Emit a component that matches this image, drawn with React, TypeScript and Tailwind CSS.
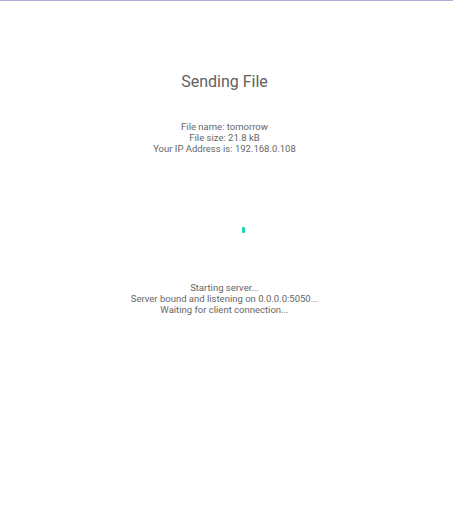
import React from "react";

const info = ["File name: tomorrow", "File size: 21.8 kB", "Your IP Address is: 192.168.0.108"];
const status = [
  "Starting server...",
  "Server bound and listening on 0.0.0.0:5050...",
  "Waiting for client connection...",
];

export default function App() {
  return (
    <div
      className="flex h-[512px] w-[453px] flex-col items-center border-t border-[#b4acd4] bg-white pr-[4px] text-[#666666]"
      style={{ fontFamily: "Roboto, 'Liberation Sans', sans-serif" }}
    >
      <h1 className="mt-[71px] text-[16px] leading-[19px] text-[#606060]">Sending File</h1>
      <div className="mt-[30px] flex flex-col items-center text-[9.5px] leading-[11px]">
        {info.map((t) => (
          <div key={t}>{t}</div>
        ))}
      </div>
      {/* spinner, mid-rotation */}
      <div className="mt-[72px] flex h-[8px] items-center">
        <div className="ml-[38px] h-[6px] w-[3px] rounded-[1px] bg-[#1cd7b6]" />
      </div>
      <div className="mt-[48px] flex flex-col items-center text-[9.5px] leading-[11px]">
        {status.map((t) => (
          <div key={t}>{t}</div>
        ))}
      </div>
    </div>
  );
}
